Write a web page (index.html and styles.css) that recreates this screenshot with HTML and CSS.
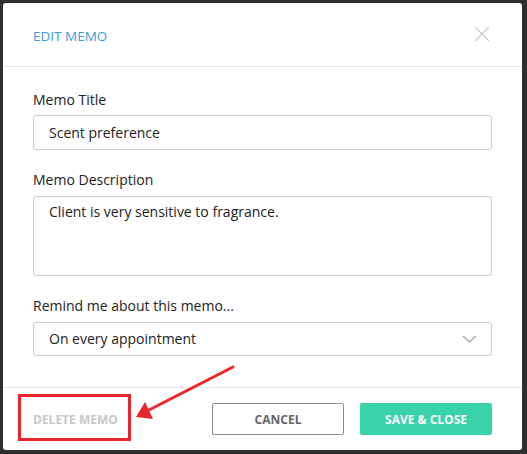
FILE: index.html
```html
<!DOCTYPE html>
<html>
<head>
<meta charset="utf-8">
<link rel="stylesheet" href="styles.css">
</head>
<body>
<div class="modal">
  <div class="modal-header">
    <h1 class="modal-title">EDIT MEMO</h1>
    <button class="close-btn" aria-label="Close">
      <svg width="16" height="16" viewBox="0 0 16 16"><path d="M1 1 L15 15 M15 1 L1 15" stroke="#c9c9c9" stroke-width="1.2" fill="none"/></svg>
    </button>
  </div>
  <div class="modal-body">
    <label class="field-label">Memo Title</label>
    <div class="input">Scent preference</div>
    <label class="field-label">Memo Description</label>
    <div class="textarea">Client is very sensitive to fragrance.</div>
    <label class="field-label">Remind me about this memo...</label>
    <div class="select">
      <span>On every appointment</span>
      <svg class="chevron" width="15" height="8" viewBox="0 0 15 8"><path d="M1 1 L7.5 7 L14 1" stroke="#9a9a9a" stroke-width="1.1" fill="none"/></svg>
    </div>
  </div>
  <div class="modal-footer">
    <button class="btn-delete">DELETE MEMO</button>
    <div class="footer-actions">
      <button class="btn btn-cancel">CANCEL</button>
      <button class="btn btn-save">SAVE &amp; CLOSE</button>
    </div>
    <div class="highlight-box"></div>
  </div>
</div>
<svg class="annotation" width="527" height="454" viewBox="0 0 527 454">
  <line x1="233" y1="367" x2="147" y2="411" stroke="#e8262b" stroke-width="3" stroke-linecap="round"/>
  <polygon points="136,417 145,402 153,419" fill="#e8262b"/>
</svg>
</body>
</html>
```
FILE: styles.css
```css
html, body {
  margin: 0;
  padding: 0;
}
body {
  background: #2f2f2f;
  width: 527px;
  height: 454px;
  overflow: hidden;
  position: relative;
  font-family: "Open Sans", "Liberation Sans", sans-serif;
  color: #222;
}
.modal {
  margin: 3px 0 0 3px;
  width: 519px;
  height: 447px;
  background: #fff;
  border-radius: 3px;
  display: flex;
  flex-direction: column;
  box-sizing: border-box;
}
.modal-header {
  height: 64px;
  box-sizing: border-box;
  border-bottom: 1px solid #e6e6e6;
  display: flex;
  align-items: center;
  justify-content: space-between;
  padding: 2px 32px 0 30px;
}
.modal-title {
  margin: 0;
  font-size: 13.5px;
  font-weight: 400;
  color: #3d9bdb;
  letter-spacing: 0;
}
.close-btn {
  border: 0;
  background: none;
  padding: 0;
  width: 16px;
  height: 16px;
  display: flex;
  margin-top: -3px;
}
.modal-body {
  flex: 1;
  padding: 23px 30px 0 30px;
  display: flex;
  flex-direction: column;
}
.field-label {
  font-size: 14px;
  line-height: 20px;
  color: #222;
  margin-bottom: 5px;
}
.input, .textarea, .select {
  border: 1px solid #cccccc;
  border-radius: 3px;
  box-sizing: border-box;
  font-size: 14px;
  line-height: 20px;
  color: #222;
  padding: 0 15px;
}
.input {
  height: 35px;
  display: flex;
  align-items: center;
  margin-bottom: 20px;
}
.textarea {
  height: 80px;
  padding-top: 5px;
  margin-top: 1px;
  margin-bottom: 20px;
}
.select {
  height: 34px;
  display: flex;
  align-items: center;
  justify-content: space-between;
  margin-top: 1px;
  padding-right: 14px;
}
.chevron {
  display: block;
}
.modal-footer {
  position: relative;
  height: 63px;
  box-sizing: border-box;
  border-top: 1px solid #e8e8e8;
  display: flex;
  align-items: flex-start;
  justify-content: space-between;
  padding: 15px 30px 0 30px;
}
.btn-delete {
  border: 0;
  background: none;
  padding: 0;
  height: 32px;
  font-family: inherit;
  font-size: 12px;
  font-weight: 700;
  color: #c8c8c8;
}
.footer-actions {
  display: flex;
  gap: 16px;
}
.btn {
  height: 32px;
  border-radius: 2px;
  font-family: inherit;
  font-size: 12px;
  font-weight: 700;
  box-sizing: border-box;
  padding: 0;
}
.btn-cancel {
  width: 132px;
  background: #fff;
  border: 1px solid #8c8c8c;
  color: #666;
}
.btn-save {
  width: 132px;
  background: #38d3a9;
  border: 0;
  color: #fff;
}
.highlight-box {
  position: absolute;
  left: 15px;
  top: 6px;
  width: 113px;
  height: 47px;
  box-sizing: border-box;
  border: 3px solid #e8262b;
}
.annotation {
  position: absolute;
  left: 0;
  top: 0;
  pointer-events: none;
}
```
